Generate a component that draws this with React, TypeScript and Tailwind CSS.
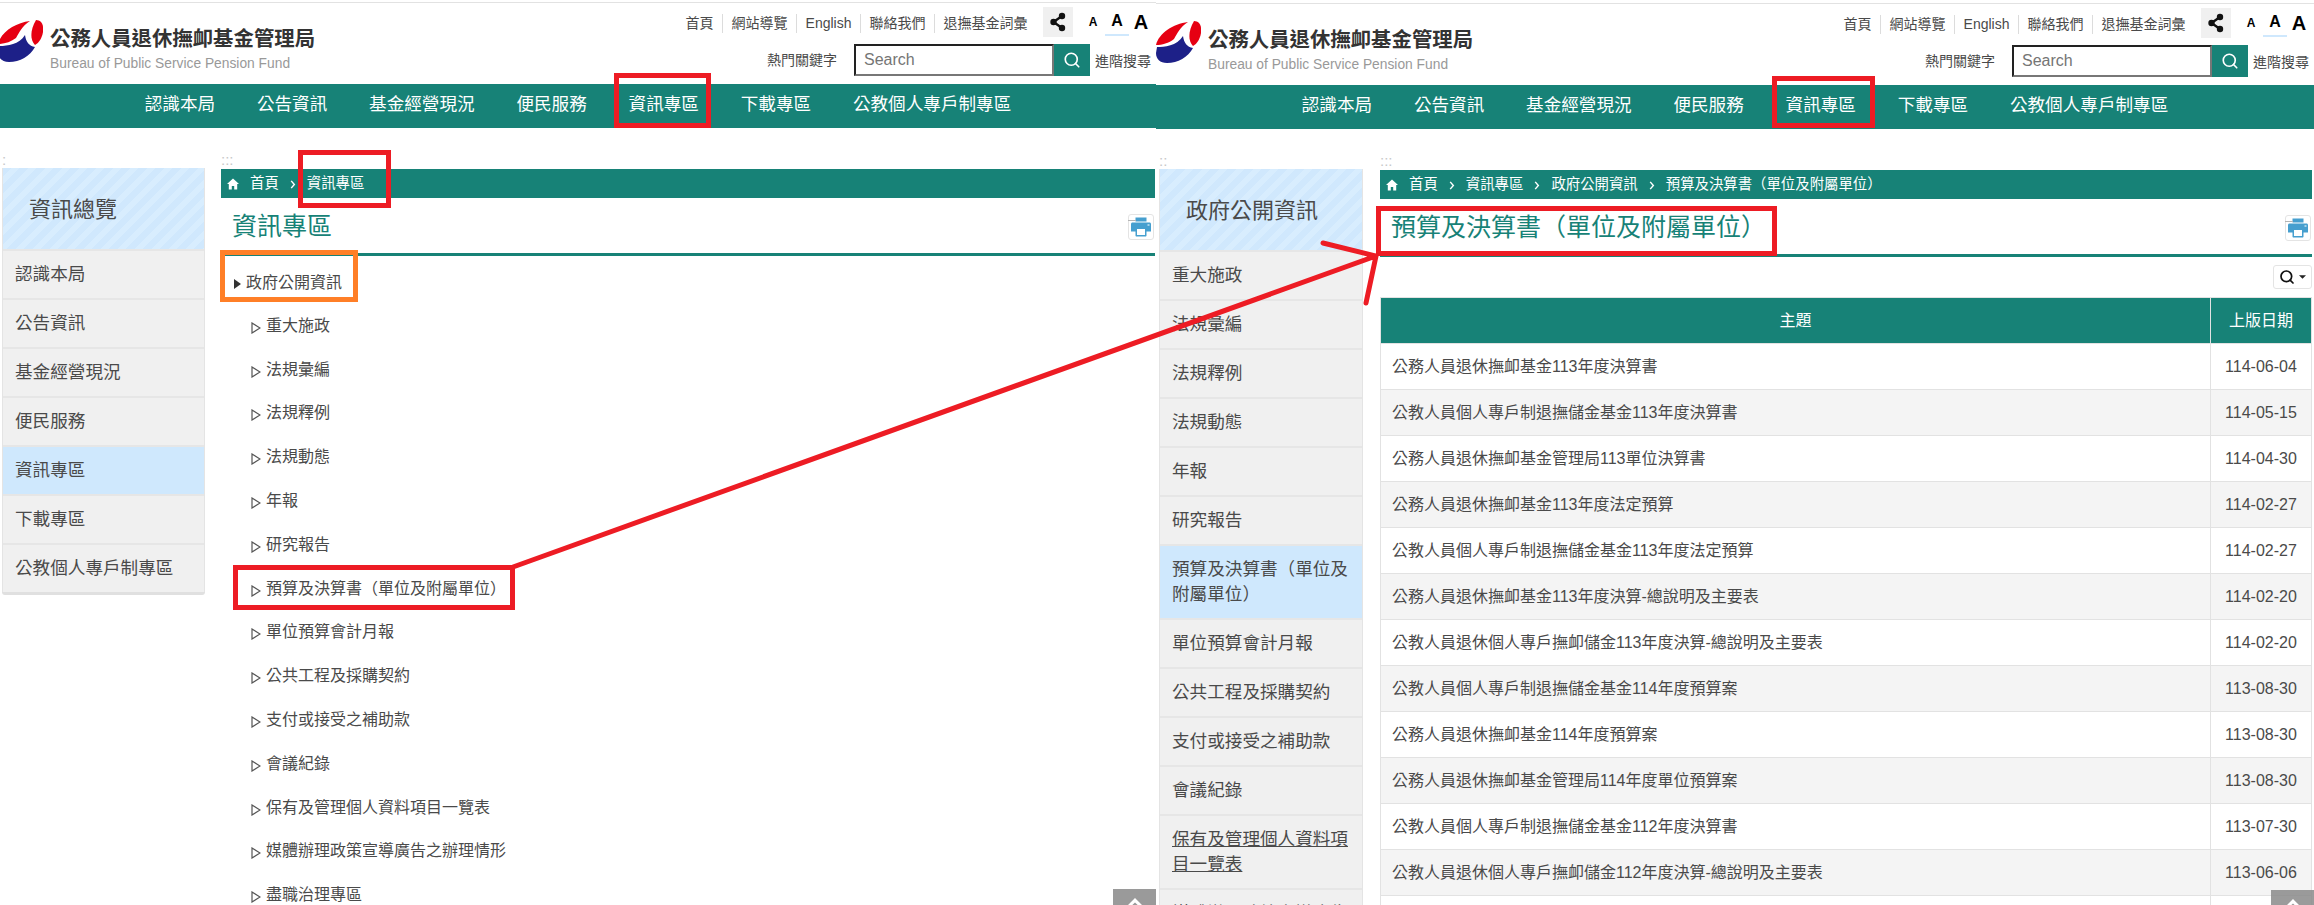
import { Search } from "lucide-react";

const navItems = ["認識本局", "公告資訊", "基金經營現況", "便民服務", "資訊專區", "下載專區", "公教個人專戶制專區"];
const topLinks = ["首頁", "網站導覽", "English", "聯絡我們", "退撫基金詞彙"];

const overviewItems = ["認識本局", "公告資訊", "基金經營現況", "便民服務", "資訊專區", "下載專區", "公教個人專戶制專區"];

const openInfoItems = [
  "重大施政",
  "法規彙編",
  "法規釋例",
  "法規動態",
  "年報",
  "研究報告",
  "預算及決算書（單位及附屬單位）",
  "單位預算會計月報",
  "公共工程及採購契約",
  "支付或接受之補助款",
  "會議紀錄",
  "保有及管理個人資料項目一覽表",
  "媒體辦理政策宣導廣告之辦理情形",
  "盡職治理專區",
];

const rows = [
  ["公務人員退休撫卹基金113年度決算書", "114-06-04"],
  ["公教人員個人專戶制退撫儲金基金113年度決算書", "114-05-15"],
  ["公務人員退休撫卹基金管理局113單位決算書", "114-04-30"],
  ["公務人員退休撫卹基金113年度法定預算", "114-02-27"],
  ["公教人員個人專戶制退撫儲金基金113年度法定預算", "114-02-27"],
  ["公務人員退休撫卹基金113年度決算-總說明及主要表", "114-02-20"],
  ["公教人員退休個人專戶撫卹儲金113年度決算-總說明及主要表", "114-02-20"],
  ["公教人員個人專戶制退撫儲金基金114年度預算案", "113-08-30"],
  ["公務人員退休撫卹基金114年度預算案", "113-08-30"],
  ["公務人員退休撫卹基金管理局114年度單位預算案", "113-08-30"],
  ["公教人員個人專戶制退撫儲金基金112年度決算書", "113-07-30"],
  ["公教人員退休個人專戶撫卹儲金112年度決算-總說明及主要表", "113-06-06"],
  ["", ""],
];

const Logo = () => (
  <svg viewBox="0 0 45 42" className="h-[42px] w-[45px] shrink-0">
    <path d="M0 24C3 12 17 3 32 1C24 6 21 13 18 18C13 22 6 24 0 24Z" fill="#e60012" />
    <path d="M38 0C44 0 46 6 45 12C44 18 41 23 37 25C32 20 32 10 38 0Z" fill="#e60012" />
    <path d="M1 26C8 26 21 25 27 15C28 22 31 26 37 27C32 36 22 42 11 42C4 42 0 38 0 32Z" fill="#1d2088" />
  </svg>
);

const ShareIcon = () => (
  <svg viewBox="0 0 16 20" className="h-[20px] w-[16px]">
    <path d="M12 4L3.5 10L12 16" fill="none" stroke="#111" strokeWidth="2.4" />
    <circle cx="12" cy="4" r="3.2" fill="#111" />
    <circle cx="3.5" cy="10" r="3.2" fill="#111" />
    <circle cx="12" cy="16" r="3.2" fill="#111" />
  </svg>
);

const HomeIcon = () => (
  <svg viewBox="0 0 12 12" className="h-[12px] w-[12px] shrink-0">
    <path d="M6 0.5L0 6H1.8V11.5H4.8V8H7.2V11.5H10.2V6H12Z" fill="#fff" />
  </svg>
);

const Chevron = () => (
  <svg viewBox="0 0 6 10" className="mx-[11px] mt-[2px] h-[9px] w-[6px] shrink-0">
    <path d="M1 1L4.5 5L1 9" fill="none" stroke="#fff" strokeWidth="1.6" />
  </svg>
);

const PrintButton = () => (
  <div className="relative mr-px flex h-[26px] w-[26px] items-center justify-center rounded-[3px] border border-[#e4e4e4] bg-white">
    <div className="absolute left-[-1px] top-[5px] h-px w-[8px] bg-[#b5b5b5]" />
    <svg viewBox="0 0 20 20" className="h-[20px] w-[20px]">
      <path
        d="M4.5 0.5H15.5V4.5H4.5ZM1.5 5.5H18.5C19.3 5.5 20 6.2 20 7V14.5H15.5V18.5C15.5 19.2 15 19.5 14.5 19.5H5.5C5 19.5 4.5 19.2 4.5 18.5V14.5H0V7C0 6.2 0.7 5.5 1.5 5.5ZM6 12V18H14V12Z"
        fill="#469fcf"
        fillRule="evenodd"
      />
      <rect x="16.5" y="7" width="2" height="2" fill="#a5d3ea" />
    </svg>
  </div>
);

const UpButton = ({ heightClass, bgClass }: { heightClass: string; bgClass: string }) => (
  <div className={`absolute bottom-0 right-0 w-[43px] overflow-hidden ${heightClass} ${bgClass}`}>
    <svg viewBox="0 0 16 16" className="mx-auto mt-[8px] h-[16px] w-[16px]">
      <path d="M1 8L8 1L15 8L15 12L8 5.5L1 12Z" fill="#fff" />
    </svg>
  </div>
);

const Header = ({ logoClass }: { logoClass: string }) => (
  <>
    <div className="mt-[2px] h-px bg-[#e2e2e2]" />
    <div className="flex h-[81px] justify-between">
      <div className={`flex pt-[17px] ${logoClass}`}>
        <Logo />
        <div className="ml-[7px]">
          <div className="mt-[1px] text-[20.4px] font-bold leading-[36px] text-[#333]">公務人員退休撫卹基金管理局</div>
          <div className="mt-[-1px] text-[13.8px] leading-[16px] text-[#999]">Bureau of Public Service Pension Fund</div>
        </div>
      </div>
      <div className="flex flex-col items-end pr-[3px] pt-[4px]">
        <div className="flex h-[30px] items-center">
          {topLinks.map((link, i) => (
            <div
              key={link}
              className={`mt-[2px] flex h-[19px] items-center px-[8.5px] pt-px text-[14px] text-[#4a4a4a] ${i > 0 ? "border-l border-[#dcdcdc]" : ""}`}
            >
              {link}
            </div>
          ))}
          <div className="ml-[7px] flex h-[30px] w-[30px] items-center justify-center bg-[#f0f0f0]">
            <ShareIcon />
          </div>
          <div className="ml-[8px] flex items-center font-bold text-black">
            <div className="flex h-[28px] w-[24px] items-center justify-center text-[12px]">A</div>
            <div className="flex h-[28px] w-[24px] items-center justify-center border-b-2 border-[#cfe8fd] text-[16px]">A</div>
            <div className="flex h-[28px] w-[24px] items-center justify-center text-[20px]">A</div>
          </div>
        </div>
        <div className="mr-[2px] mt-[7px] flex items-center">
          <span className="text-[14px] text-[#4a4a4a]">熱門關鍵字</span>
          <input
            readOnly
            placeholder="Search"
            className="ml-[17px] h-[32px] w-[200px] border-2 border-b-[#777] border-l-[#222] border-r-[#777] border-t-[#222] pl-[8px] text-[16px] placeholder:text-[#757575]"
          />
          <div className="flex h-[32px] w-[36px] items-center justify-center bg-[#178277]">
            <Search size={18} color="#fff" strokeWidth={2.2} />
          </div>
          <span className="ml-[5px] mt-[2px] text-[14px] text-[#4a4a4a]">進階搜尋</span>
        </div>
      </div>
    </div>
    <nav className="flex h-[44px] items-center justify-center bg-[#178277] pb-[3px]">
      {navItems.map((item) => (
        <a key={item} className="px-[20.9px] text-[17.6px] text-white">
          {item}
        </a>
      ))}
    </nav>
  </>
);

const SideNav = ({
  title,
  items,
  active,
  underlined,
}: {
  title: string;
  items: string[];
  active: string;
  underlined?: string;
}) => (
  <div className="border-x border-[#e4e4e4] bg-[#f0f0f0]">
    <div className="flex h-[81px] items-center bg-[repeating-linear-gradient(135deg,#d0e8fd_0px,#d0e8fd_6px,#d8edfe_6px,#d8edfe_12px)] pl-[26px] pt-[2px] text-[22px] text-[#4a4a4a]">
      {title}
    </div>
    {items.map((item) => (
      <div
        key={item}
        className={`border-t-2 border-[#e6e6e6] px-[12px] py-[11px] text-[17.6px] leading-[25px] text-[#4a4a4a] ${
          item === active ? "bg-[#cfe8fd]" : ""
        } ${item === underlined ? "underline" : ""}`}
      >
        {item}
      </div>
    ))}
  </div>
);

const Breadcrumb = ({ trail }: { trail: string[] }) => (
  <div className="flex h-[29px] items-center bg-[#178277] pl-[6px] text-[14.4px] text-white">
    <HomeIcon />
    <span className="ml-[11px]">首頁</span>
    {trail.map((crumb) => (
      <span key={crumb} className="flex items-center">
        <Chevron />
        {crumb}
      </span>
    ))}
  </div>
);

const TitleBar = ({ title }: { title: string }) => (
  <div className="flex h-[58px] items-center justify-between border-b-[3px] border-[#178277] pl-[11px] pt-[2px]">
    <h1 className="text-[25px] text-[#178277]">{title}</h1>
    <PrintButton />
  </div>
);

const Dots = ({ text, heightClass }: { text: string; heightClass: string }) => (
  <div className={`text-[15px] leading-[15px] text-[#c8c8c8] ${heightClass}`}>{text}</div>
);

const OverviewPanel = () => (
  <section className="relative h-[905px] w-[1156px] shrink-0 overflow-hidden">
    <Header logoClass="-ml-[2px]" />
    <div className="flex pl-[2px] pr-px pt-[24px]">
      <aside className="w-[203px] shrink-0">
        <Dots text=":" heightClass="h-[16px]" />
        <SideNav title="資訊總覽" items={overviewItems} active="資訊專區" />
        <div className="h-[3px] rounded-b-[3px] bg-[#e0e0e0]" />
      </aside>
      <main className="ml-[16px] flex-1">
        <Dots text=":::" heightClass="h-[17px]" />
        <Breadcrumb trail={["資訊專區"]} />
        <TitleBar title="資訊專區" />
        <div className="mt-[6px] flex h-[42px] items-center pl-[13px] text-[16px] text-[#4a4a4a]">
          <svg viewBox="0 0 7 10" className="mr-[5px] mt-[1px] h-[10px] w-[7px]">
            <path d="M0 0L7 5L0 10Z" fill="#333" />
          </svg>
          政府公開資訊
        </div>
        <ul className="pl-[30px] text-[16px] text-[#4a4a4a]">
          {openInfoItems.map((item) => (
            <li key={item} className="flex h-[43.8px] items-center">
              <svg viewBox="0 0 10 12" className="mr-[5px] mt-[4px] h-[12px] w-[10px] shrink-0">
                <path d="M1 1L9 6L1 11Z" fill="none" stroke="#555" strokeWidth="1.2" />
              </svg>
              {item}
            </li>
          ))}
        </ul>
      </main>
    </div>
    <UpButton heightClass="h-[16px]" bgClass="bg-[#9a9a9a]" />
  </section>
);

const BudgetPanel = () => (
  <section className="relative mt-px h-[904px] w-[1158px] shrink-0 overflow-hidden">
    <Header logoClass="" />
    <div className="flex pl-[3px] pr-[2px] pt-[24px]">
      <aside className="w-[204px] shrink-0">
        <Dots text="::" heightClass="h-[16px]" />
        <SideNav
          title="政府公開資訊"
          items={openInfoItems.slice(0, 13)}
          active="預算及決算書（單位及附屬單位）"
          underlined="保有及管理個人資料項目一覽表"
        />
      </aside>
      <main className="ml-[17px] flex-1">
        <Dots text=":::" heightClass="h-[17px]" />
        <Breadcrumb trail={["資訊專區", "政府公開資訊", "預算及決算書（單位及附屬單位）"]} />
        <TitleBar title="預算及決算書（單位及附屬單位）" />
        <div className="mt-[8px] flex justify-end">
          <div className="flex h-[24px] w-[39px] items-center justify-center rounded-[3px] border border-[#e4e4e4]">
            <Search size={16} color="#111" strokeWidth={2.6} />
            <svg viewBox="0 0 8 4" className="ml-[4px] h-[4px] w-[7px]">
              <path d="M0 0H8L4 4Z" fill="#222" />
            </svg>
          </div>
        </div>
        <table className="mt-[8px] w-full table-fixed border-collapse text-[16px] text-[#4a4a4a]">
          <thead>
            <tr className="h-[46px] bg-[#178277] text-white">
              <th className="border border-[#e2e2e2] font-normal">主題</th>
              <th className="w-[101px] border border-[#e2e2e2] font-normal">上版日期</th>
            </tr>
          </thead>
          <tbody>
            {rows.map(([subject, date], i) => (
              <tr key={i} className="h-[46px] odd:bg-white even:bg-[#f4f4f4]">
                <td className="border border-[#e2e2e2] pl-[11px]">{subject}</td>
                <td className="border border-[#e2e2e2] text-center">{date}</td>
              </tr>
            ))}
          </tbody>
        </table>
      </main>
    </div>
    <UpButton heightClass="h-[15px]" bgClass="bg-[#8a8a8a]/85" />
  </section>
);

// red and orange marks someone drew over the two screens
const Annotations = () => (
  <div className="pointer-events-none absolute inset-0">
    <div className="absolute left-[614px] top-[73px] h-[55px] w-[97px] border-[5px] border-[#ed1c24]" />
    <div className="absolute left-[298px] top-[150px] h-[58px] w-[93px] border-[5px] border-[#ed1c24]" />
    <div className="absolute left-[220px] top-[250px] h-[52px] w-[138px] border-[5px] border-[#ff7f27]" />
    <div className="absolute left-[233px] top-[565px] h-[45px] w-[282px] border-[5px] border-[#ed1c24]" />
    <div className="absolute left-[1772px] top-[76px] h-[52px] w-[103px] border-[5px] border-[#ed1c24]" />
    <div className="absolute left-[1376px] top-[206px] h-[50px] w-[401px] border-[5px] border-[#ed1c24]" />
    <svg viewBox="0 0 2314 905" className="absolute left-0 top-0 h-[905px] w-[2314px]">
      <path
        d="M513 567L1376 256M1323 243L1376 256L1366 303"
        fill="none"
        stroke="#ed1c24"
        strokeWidth="5"
        strokeLinecap="round"
      />
    </svg>
  </div>
);

export default function App() {
  return (
    <div className="relative flex h-[905px] w-[2314px] overflow-hidden bg-white font-['Liberation_Sans','Noto_Sans_CJK_TC',sans-serif] [text-spacing-trim:space-all]">
      <OverviewPanel />
      <BudgetPanel />
      <Annotations />
    </div>
  );
}
